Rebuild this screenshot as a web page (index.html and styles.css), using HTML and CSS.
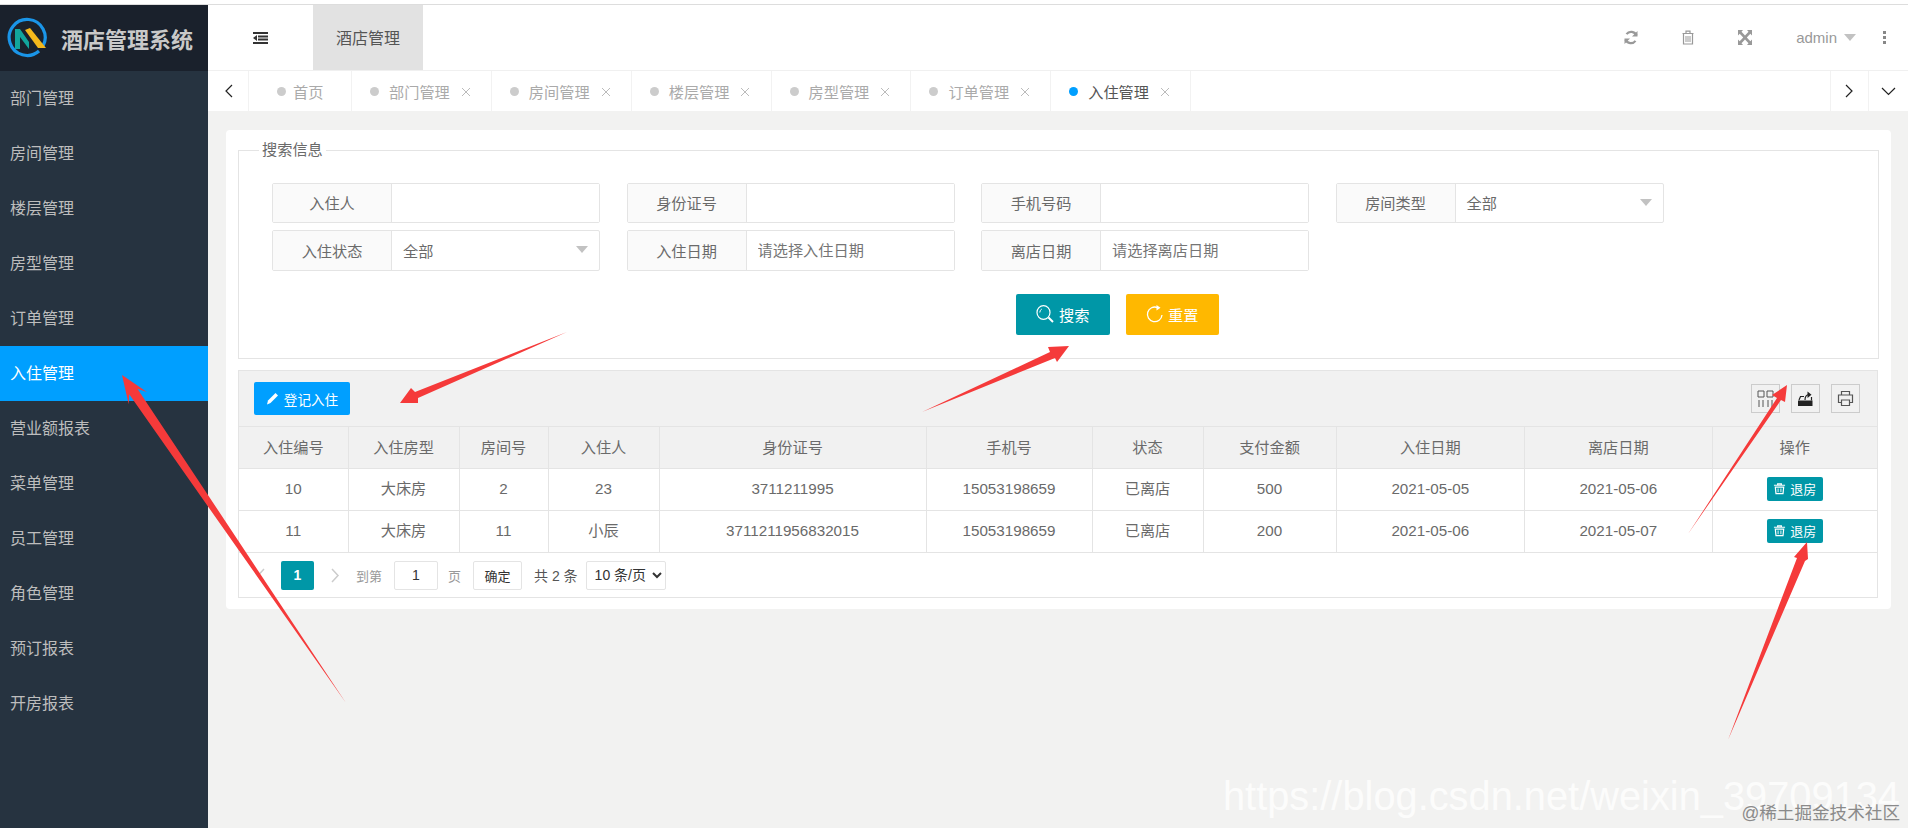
FILE: index.html
```html
<!DOCTYPE html>
<html lang="zh-CN">
<head>
  <meta charset="UTF-8">
  <title>酒店管理系统</title>
  <link rel="stylesheet" href="styles.css">
</head>
<body>
<svg class="defs" width="0" height="0">
  <symbol id="i-close" viewBox="0 0 10 10"><path d="M1 1l8 8M9 1l-8 8" fill="none" stroke="currentColor" stroke-width="1"/></symbol>
  <symbol id="i-trash" viewBox="0 0 14 14"><path d="M1 3.500h12M5 3.500V2h4v1.500M2.500 5.500h9l-.7 7H3.200z" fill="none" stroke="currentColor" stroke-width="1.300"/><path d="M5.500 7v4M8.500 7v4" stroke="currentColor"/></symbol>
</svg>
<div class="page">
  <aside class="sidebar">
    <div class="logo">
      <svg class="logo-mark" viewBox="0 0 44 44">
        <path d="M36 35A18 18 0 1 1 40 30" fill="none" stroke="#1a95e8" stroke-width="3.200"/>
        <path d="M12 33V13h5l9 13v7l-9-12v12z" fill="#12a59c"/>
        <path d="M22 14l5-2 16 20-8 0z" fill="#f4b81c"/>
      </svg>
      <span class="logo-title">酒店管理系统</span>
    </div>
    <ul class="menu">
      <li>部门管理</li>
      <li>房间管理</li>
      <li>楼层管理</li>
      <li>房型管理</li>
      <li>订单管理</li>
      <li class="active">入住管理</li>
      <li>营业额报表</li>
      <li>菜单管理</li>
      <li>员工管理</li>
      <li>角色管理</li>
      <li>预订报表</li>
      <li>开房报表</li>
    </ul>
  </aside>

  <div class="main">
    <header class="topbar">
      <div class="shrink">
        <svg width="15" height="12" viewBox="0 0 15 12"><path d="M0 1h15M5 4.500h10M5 7.500h10M0 11h15" stroke="#333" stroke-width="2"/><path d="M0 6l4-3v6z" fill="#333"/></svg>
      </div>
      <div class="top-tab">酒店管理</div>
      <div class="top-right">
        <span class="top-icon">
          <svg width="14" height="15" viewBox="0 0 14 15"><path d="M12.500 5.500A5.800 5.800 0 0 0 2.500 4.200" fill="none" stroke="#999" stroke-width="2.200"/><path d="M13.500 1v5.500H8z" fill="#999"/><path d="M1.500 9.500A5.800 5.800 0 0 0 11.500 10.800" fill="none" stroke="#999" stroke-width="2.200"/><path d="M.5 14V8.500H6z" fill="#999"/></svg>
        </span>
        <span class="top-icon">
          <svg width="12" height="15" viewBox="0 0 12 15"><path d="M.5 3.500h11M4 3.500V1.200h4v2.300M1.500 3.500V14h9V3.500" fill="none" stroke="#999" stroke-width="1.200"/><path d="M4 6v6M6 6v6M8 6v6" stroke="#999"/></svg>
        </span>
        <span class="top-icon">
          <svg width="14" height="15" viewBox="0 0 14 15"><path d="M0 0h5L3.500 1.800 7 5.500 10.500 1.800 9 0h5v5.500L12.300 3.800 8.800 7.500l3.500 3.700L14 9.500V15H9l1.500-1.800L7 9.500l-3.500 3.700L5 15H0V9.500l1.700 1.700 3.500-3.700-3.500-3.700L0 5.500z" fill="#999"/></svg>
        </span>
        <span class="admin">admin</span>
        <span class="caret"></span>
        <span class="dots"><i></i><i></i><i></i></span>
      </div>
    </header>

    <nav class="tabbar">
      <div class="tab-ctrl ctrl-left">
        <svg width="9" height="14" viewBox="0 0 9 14"><path d="M8 1L2 7l6 6" fill="none" stroke="#222" stroke-width="1.200"/></svg>
      </div>
      <div class="tab home"><i class="dot"></i>首页</div>
      <div class="tab"><i class="dot"></i>部门管理<svg class="tab-x"><use href="#i-close"/></svg></div>
      <div class="tab"><i class="dot"></i>房间管理<svg class="tab-x"><use href="#i-close"/></svg></div>
      <div class="tab"><i class="dot"></i>楼层管理<svg class="tab-x"><use href="#i-close"/></svg></div>
      <div class="tab"><i class="dot"></i>房型管理<svg class="tab-x"><use href="#i-close"/></svg></div>
      <div class="tab"><i class="dot"></i>订单管理<svg class="tab-x"><use href="#i-close"/></svg></div>
      <div class="tab current"><i class="dot"></i>入住管理<svg class="tab-x"><use href="#i-close"/></svg></div>
      <div class="tab-fill"></div>
      <div class="tab-ctrl ctrl-next">
        <svg width="9" height="14" viewBox="0 0 9 14"><path d="M1 1l6 6-6 6" fill="none" stroke="#222" stroke-width="1.200"/></svg>
      </div>
      <div class="tab-ctrl ctrl-down">
        <svg width="15" height="9" viewBox="0 0 15 9"><path d="M1 1l6.500 6.500L14 1" fill="none" stroke="#222" stroke-width="1.200"/></svg>
      </div>
    </nav>

    <main class="content">
      <div class="card">
        <fieldset class="search-box">
          <legend>搜索信息</legend>
          <div class="search-grid">
            <div class="field"><label>入住人</label><input type="text"></div>
            <div class="field"><label>身份证号</label><input type="text"></div>
            <div class="field"><label>手机号码</label><input type="text"></div>
            <div class="field"><label>房间类型</label><div class="fake-select">全部<span class="caret"></span></div></div>
            <div class="field"><label>入住状态</label><div class="fake-select">全部<span class="caret"></span></div></div>
            <div class="field"><label>入住日期</label><input type="text" placeholder="请选择入住日期"></div>
            <div class="field"><label>离店日期</label><input type="text" placeholder="请选择离店日期"></div>
          </div>
          <div class="search-actions">
            <button class="btn btn-teal">
              <svg width="19" height="18" viewBox="0 0 19 18"><ellipse cx="7.500" cy="7.500" rx="6.500" ry="6.800" fill="none" stroke="#fff" stroke-width="1.200"/><path d="M3.800 7.500a4 4 0 0 1 2-3.500" fill="none" stroke="#fff"/><path d="M12.500 12.500l4.500 4.500" stroke="#fff" stroke-width="2"/></svg>
              搜索
            </button>
            <button class="btn btn-yellow">
              <svg width="18" height="18" viewBox="0 0 18 18"><path d="M11.500 2.600A7.300 7.300 0 1 0 16 10" fill="none" stroke="#fff" stroke-width="1.300"/><path d="M10.500 0l4 2.800-4 2.700z" fill="#fff"/></svg>
              重置
            </button>
          </div>
        </fieldset>

        <div class="table-panel">
          <div class="table-tools">
            <button class="btn-add">
              <svg width="13" height="13" viewBox="0 0 13 13"><path d="M9.500 1l2.500 2.500-7.500 7.500L1 12.500 2 8.500z" fill="#fff"/></svg>
              登记入住
            </button>
            <div class="tool-group">
              <span class="tool">
                <svg width="17" height="17" viewBox="0 0 17 17"><path d="M1 1h6v6H1zM10 1h6v6h-6zM2 10v7M6 10v7M11 10v7M15 10v7" fill="none" stroke="#555"/></svg>
              </span>
              <span class="tool">
                <svg width="17" height="17" viewBox="0 0 17 17"><path d="M1 10.500h14.500V16H1z" fill="#222"/><path d="M2 10l1.500-3.500H7M14.500 7v3.500M8 10c0-3 1.500-5.300 4-5.300" fill="none" stroke="#222" stroke-width="1.200"/><path d="M10.500 1.500l4 3.200-4 3.200z" fill="#222"/></svg>
              </span>
              <span class="tool">
                <svg width="17" height="17" viewBox="0 0 17 17"><path d="M4.500 5V1.500h8V5M4.500 12.500H1.500V5h14v7.500h-3M4.500 10h8v5.500h-8z" fill="none" stroke="#555" stroke-width="1.200"/></svg>
              </span>
            </div>
          </div>
          <table class="data-table">
            <colgroup><col><col><col><col><col><col><col><col><col><col><col></colgroup>
            <thead>
              <tr>
                <th>入住编号</th><th>入住房型</th><th>房间号</th><th>入住人</th><th>身份证号</th><th>手机号</th><th>状态</th><th>支付金额</th><th>入住日期</th><th>离店日期</th><th>操作</th>
              </tr>
            </thead>
            <tbody>
              <tr>
                <td>10</td><td class="cn">大床房</td><td>2</td><td>23</td><td>3711211995</td><td>15053198659</td><td class="cn">已离店</td><td>500</td><td>2021-05-05</td><td>2021-05-06</td>
                <td><button class="btn-out"><svg width="13" height="13"><use href="#i-trash"/></svg>退房</button></td>
              </tr>
              <tr>
                <td>11</td><td class="cn">大床房</td><td>11</td><td class="cn">小辰</td><td>3711211956832015</td><td>15053198659</td><td class="cn">已离店</td><td>200</td><td>2021-05-06</td><td>2021-05-07</td>
                <td><button class="btn-out"><svg width="13" height="13"><use href="#i-trash"/></svg>退房</button></td>
              </tr>
            </tbody>
          </table>
          <div class="pager">
            <svg class="pg-prev" width="9" height="15" viewBox="0 0 9 15"><path d="M8 1L2 7.500 8 14" fill="none" stroke="#ccc" stroke-width="1.500"/></svg>
            <span class="pg-cur">1</span>
            <svg class="pg-next" width="9" height="15" viewBox="0 0 9 15"><path d="M1 1l6 6.500L1 14" fill="none" stroke="#ccc" stroke-width="1.500"/></svg>
            <span class="pg-text pg-to">到第</span>
            <input class="pg-input" type="text" value="1">
            <span class="pg-text pg-unit">页</span>
            <button class="pg-ok">确定</button>
            <span class="pg-total">共 2 条</span>
            <select class="pg-size"><option>10 条/页</option></select>
          </div>
        </div>
      </div>
    </main>
  </div>
</div>

<!-- 截图上的标注箭头 -->
<svg class="arrows" viewBox="0 0 1908 828">
  <polygon points="346,703 137.400,388.700 146.900,391.900 122,375 128.700,404.300 129.200,394.300"/>
  <polygon points="567,332 415,392 411,388 400,403 418,403 418,398"/>
  <polygon points="922,412 1050,352 1048,347 1069,346 1057,362 1055,358"/>
  <polygon points="1688,534 1777,398 1772,395 1787,385 1785,402 1781,400"/>
  <polygon points="1728,740 1797,558 1794,557 1807,542 1808,559 1805,561"/>
</svg>
<div class="mark-url">https://blog.csdn.net/weixin_39709134</div>
<div class="mark-site">@稀土掘金技术社区</div>
</body>
</html>
```

FILE: styles.css
```css
:root {
  --teal: #0097a7;
  --blue: #009fff;
  --line: #e4e4e4;
  --text: #6a6a6a;
}
* { box-sizing: border-box; }
body {
  margin: 0;
  height: 828px;
  overflow: hidden;
  background: #fff;
  color: var(--text);
  font-family: "Liberation Sans", "Noto Sans CJK SC", sans-serif;
  font-size: 15.2px;
}
.defs { position: absolute; }
.page {
  display: flex;
  height: 823px;
  margin-top: 5px;
  position: relative;
}
.page::before {
  content: "";
  position: absolute;
  left: 0;
  right: 0;
  top: -1px;
  height: 1px;
  background: #ddd;
}

/* 左侧菜单 */
.sidebar {
  width: 208px;
  flex: none;
  background: #263340;
}
.logo {
  height: 66px;
  display: flex;
  align-items: center;
  padding-left: 3px;
  background: #1a212c;
}
.logo-mark { width: 44px; height: 44px; }
.logo-title {
  margin-left: 14px;
  font-size: 22px;
  font-weight: bold;
  color: #c9c9c9;
}
.menu { list-style: none; margin: 0; padding: 0; }
.menu li {
  height: 55px;
  line-height: 55px;
  padding-left: 10px;
  font-size: 16px;
  color: #bdbdbd;
}
.menu li.active { background: var(--blue); color: #fff; }

.main {
  flex: 1;
  display: flex;
  flex-direction: column;
  min-width: 0;
  background: #f2f2f1;
}

/* 顶栏 */
.topbar {
  height: 66px;
  flex: none;
  display: flex;
  background: #fff;
  border-bottom: 1px solid #f0f0f0;
}
.shrink {
  width: 105px;
  display: flex;
  align-items: center;
  justify-content: center;
}
.top-tab {
  width: 110px;
  display: flex;
  align-items: center;
  justify-content: center;
  padding-bottom: 2px;
  background: #e2e2e2;
  color: #555;
  font-size: 16px;
}
.top-right {
  margin-left: auto;
  display: flex;
  align-items: center;
  padding-right: 20px;
}
.top-icon {
  width: 57px;
  display: flex;
  justify-content: center;
}
.admin { margin-left: 23px; color: #999; font-size: 15px; }
.caret {
  width: 0;
  height: 0;
  border-left: 6px solid transparent;
  border-right: 6px solid transparent;
  border-top: 7px solid #c2c2c2;
}
.top-right .caret { margin-left: 7px; }
.dots {
  margin-left: 24px;
  width: 8px;
  display: flex;
  flex-direction: column;
  align-items: center;
  gap: 2px;
}
.dots i { width: 3px; height: 3px; background: #888; }

/* 标签栏 */
.tabbar {
  height: 40px;
  flex: none;
  display: flex;
  background: #fff;
}
.tab-ctrl {
  display: flex;
  align-items: center;
  justify-content: center;
}
.ctrl-left { width: 41px; border-right: 1px solid #f2f2f2; }
.ctrl-next { width: 38px; border-left: 1px solid #f2f2f2; }
.ctrl-down { width: 40px; border-left: 1px solid #f2f2f2; }
.tab {
  width: 139.850px;
  display: flex;
  align-items: center;
  padding-left: 18px;
  border-right: 1px solid #f2f2f2;
  color: #aaa;
}
.tab.home { width: 103px; padding-left: 28px; }
.tab.home .dot { margin-right: 7px; }
.tab-fill { flex: 1; }
.dot {
  width: 9px;
  height: 9px;
  margin-right: 10px;
  border-radius: 50%;
  background: #ccc;
}
.tab.current { color: #555; }
.tab.current .dot { background: var(--blue); }
.tab-x { width: 10px; height: 10px; margin-left: 11px; margin-top: 2px; color: #bbb; }

/* 内容区 */
.content { padding: 19px 17px 0 18px; }
.card {
  padding: 9px 12px 11px;
  background: #fff;
  border-radius: 4px;
}
.search-box {
  margin: 0;
  padding: 22px 33px 23px;
  border: 1px solid var(--line);
  min-width: 0;
}
.search-box legend {
  margin-left: -13px;
  padding: 0 3px;
  line-height: 22px;
}
.search-grid {
  display: grid;
  grid-template-columns: repeat(4, 328px);
  grid-template-rows: 40px 41px;
  column-gap: 26.500px;
  row-gap: 7px;
}
.field {
  display: flex;
  border: 1px solid var(--line);
  border-radius: 2px;
}
.field label {
  width: 119px;
  flex: none;
  display: flex;
  align-items: center;
  justify-content: center;
  padding-bottom: 2px;
  background: #fafafa;
  border-right: 1px solid var(--line);
}
.field input {
  flex: 1;
  min-width: 0;
  padding: 0 11px;
  border: 0;
  outline: 0;
  font: inherit;
  color: var(--text);
}
.field input::placeholder { color: #757575; }
.fake-select {
  flex: 1;
  display: flex;
  align-items: center;
  justify-content: space-between;
  padding: 0 11px 2px;
}
.search-actions {
  display: flex;
  gap: 16px;
  margin: 23px 0 0 744px;
}
.btn {
  width: 93.500px;
  height: 41px;
  display: flex;
  align-items: center;
  justify-content: center;
  gap: 4px;
  padding: 0 0 2px;
  border: 0;
  border-radius: 2px;
  color: #fff;
  font: inherit;
}
.btn-teal { background: var(--teal); }
.btn-yellow { background: #ffb800; }

/* 表格 */
.table-panel {
  margin-top: 11px;
  margin-right: 1px;
  border: 1px solid var(--line);
}
.table-tools {
  height: 55px;
  display: flex;
  align-items: center;
  justify-content: space-between;
  padding: 0 17px 0 15px;
  background: #f1f1f1;
}
.btn-add {
  width: 96px;
  height: 33px;
  display: flex;
  align-items: center;
  justify-content: center;
  gap: 5px;
  padding: 0;
  border: 0;
  border-radius: 2px;
  background: var(--blue);
  color: #fff;
  font-family: inherit;
  font-size: 13.600px;
}
.tool-group { display: flex; gap: 11px; }
.tool {
  width: 29px;
  height: 29px;
  display: flex;
  align-items: center;
  justify-content: center;
  border: 1px solid #ccc;
}
.data-table {
  width: 100%;
  table-layout: fixed;
  border-collapse: collapse;
}
.data-table col:nth-child(1) { width: 109px; }
.data-table col:nth-child(2), .data-table col:nth-child(4) { width: 111px; }
.data-table col:nth-child(3) { width: 89px; }
.data-table col:nth-child(5) { width: 267px; }
.data-table col:nth-child(6) { width: 166px; }
.data-table col:nth-child(7) { width: 111px; }
.data-table col:nth-child(8) { width: 133px; }
.data-table col:nth-child(9) { width: 188.500px; }
.data-table col:nth-child(10) { width: 187.500px; }
.data-table th, .data-table td {
  height: 42px;
  padding: 0 0 2px;
  border: 1px solid var(--line);
  text-align: center;
  font-weight: normal;
}
.data-table th { padding-bottom: 4px; }
.data-table td.cn { padding-bottom: 5px; }
.data-table tr > :first-child { border-left: 0; }
.data-table tr > :last-child { border-right: 0; }
.data-table th { background: #f1f1f1; }
.btn-out {
  width: 56px;
  height: 24px;
  display: inline-flex;
  align-items: center;
  justify-content: center;
  gap: 4px;
  padding: 0;
  border: 0;
  border-radius: 2px;
  vertical-align: middle;
  background: var(--teal);
  color: #fff;
  font-family: inherit;
  font-size: 13px;
}

/* 分页 */
.pager {
  height: 44px;
  display: flex;
  align-items: center;
  font-size: 13px;
}
.pg-prev { margin-left: 17px; }
.pg-cur {
  width: 33px;
  height: 29px;
  margin-left: 16px;
  display: flex;
  align-items: center;
  justify-content: center;
  border-radius: 2px;
  background: var(--teal);
  color: #fff;
  font-size: 14px;
  font-weight: bold;
}
.pg-next { margin-left: 17px; }
.pg-text { color: #999; }
.pg-to { margin-left: 16px; }
.pg-input {
  width: 44px;
  height: 29px;
  margin-left: 12px;
  padding: 0;
  border: 1px solid var(--line);
  border-radius: 2px;
  text-align: center;
  font: inherit;
  font-size: 14px;
  color: #333;
}
.pg-unit { margin-left: 10px; }
.pg-ok {
  width: 49px;
  height: 29px;
  margin-left: 12px;
  padding: 0;
  border: 1px solid var(--line);
  border-radius: 2px;
  background: #fff;
  color: #333;
  font: inherit;
}
.pg-total { margin-left: 12px; color: #555; font-size: 14px; }
.pg-size {
  width: 80px;
  height: 29px;
  margin-left: 8px;
  padding: 0 0 0 4px;
  border: 1px solid var(--line);
  border-radius: 2px;
  background: #fff;
  color: #333;
  font: inherit;
  font-size: 14px;
}

/* 标注和水印 */
.arrows {
  position: absolute;
  left: 0;
  top: 0;
  width: 1908px;
  height: 828px;
  pointer-events: none;
}
.arrows polygon { fill: #f53a3a; }
.mark-url {
  position: absolute;
  right: 8px;
  bottom: 9px;
  font-size: 39.800px;
  line-height: 46px;
  color: rgba(255, 255, 255, 0.8);
  white-space: nowrap;
}
.mark-site {
  position: absolute;
  right: 8px;
  bottom: 4px;
  font-size: 17.600px;
  line-height: 22px;
  color: #8a8a8a;
  white-space: nowrap;
}
```
